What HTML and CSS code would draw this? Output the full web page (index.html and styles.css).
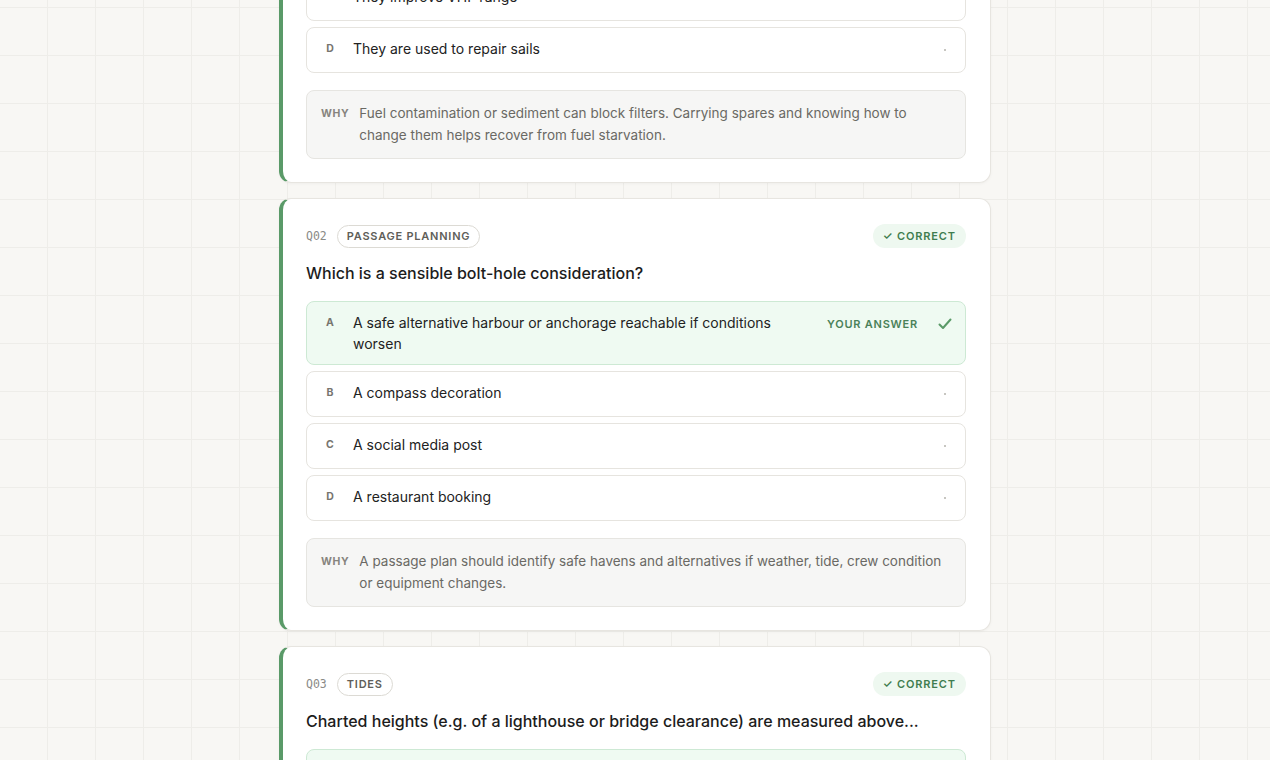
FILE: index.html
```html
<!DOCTYPE html>
<html lang="en">
<head>
    <meta charset="UTF-8">
    <meta name="viewport" content="width=device-width, initial-scale=1.0">
    <title>Quiz Review</title>
    <link rel="stylesheet" href="styles.css">
</head>
<body>
    <main class="quiz">
        <article class="q-card">
            <div class="q-head">
                <span class="q-num">Q01</span>
                <span class="q-tag">Engine</span>
                <span class="q-status">✓ Correct</span>
            </div>
            <h2 class="q-text">Why should you carry spare fuel filters on board?</h2>
            <ul class="options">
                <li class="option picked">
                    <span class="opt-key">A</span>
                    <span class="opt-text">A blocked filter can stop the engine, so spares let you change them at sea</span>
                    <span class="opt-note">Your answer</span>
                    <span class="opt-mark"><svg width="14" height="14" viewBox="0 0 14 14"><path d="M1.5 7.5 L5 11 L12.5 2.5" fill="none" stroke="#5a9a68" stroke-width="2" stroke-linecap="round" stroke-linejoin="round"/></svg></span>
                </li>
                <li class="option">
                    <span class="opt-key">B</span>
                    <span class="opt-text">They make the engine run faster</span>
                    <span class="opt-mark"><i class="dot"></i></span>
                </li>
                <li class="option">
                    <span class="opt-key">C</span>
                    <span class="opt-text">They improve VHF range</span>
                    <span class="opt-mark"><i class="dot"></i></span>
                </li>
                <li class="option">
                    <span class="opt-key">D</span>
                    <span class="opt-text">They are used to repair sails</span>
                    <span class="opt-mark"><i class="dot"></i></span>
                </li>
            </ul>
            <div class="why">
                <span class="why-label">Why</span>
                <p>Fuel contamination or sediment can block filters. Carrying spares and knowing how to change them helps recover from fuel starvation.</p>
            </div>
        </article>

        <article class="q-card">
            <div class="q-head">
                <span class="q-num">Q02</span>
                <span class="q-tag">Passage planning</span>
                <span class="q-status">✓ Correct</span>
            </div>
            <h2 class="q-text">Which is a sensible bolt-hole consideration?</h2>
            <ul class="options">
                <li class="option picked">
                    <span class="opt-key">A</span>
                    <span class="opt-text">A safe alternative harbour or anchorage reachable if conditions worsen</span>
                    <span class="opt-note">Your answer</span>
                    <span class="opt-mark"><svg width="14" height="14" viewBox="0 0 14 14"><path d="M1.5 7.5 L5 11 L12.5 2.5" fill="none" stroke="#5a9a68" stroke-width="2" stroke-linecap="round" stroke-linejoin="round"/></svg></span>
                </li>
                <li class="option">
                    <span class="opt-key">B</span>
                    <span class="opt-text">A compass decoration</span>
                    <span class="opt-mark"><i class="dot"></i></span>
                </li>
                <li class="option">
                    <span class="opt-key">C</span>
                    <span class="opt-text">A social media post</span>
                    <span class="opt-mark"><i class="dot"></i></span>
                </li>
                <li class="option">
                    <span class="opt-key">D</span>
                    <span class="opt-text">A restaurant booking</span>
                    <span class="opt-mark"><i class="dot"></i></span>
                </li>
            </ul>
            <div class="why">
                <span class="why-label">Why</span>
                <p>A passage plan should identify safe havens and alternatives if weather, tide, crew condition or equipment changes.</p>
            </div>
        </article>

        <article class="q-card">
            <div class="q-head">
                <span class="q-num">Q03</span>
                <span class="q-tag">Tides</span>
                <span class="q-status">✓ Correct</span>
            </div>
            <h2 class="q-text">Charted heights (e.g. of a lighthouse or bridge clearance) are measured above...</h2>
            <ul class="options">
                <li class="option picked">
                    <span class="opt-key">A</span>
                    <span class="opt-text">Mean High Water Springs (MHWS)</span>
                    <span class="opt-note">Your answer</span>
                    <span class="opt-mark"><svg width="14" height="14" viewBox="0 0 14 14"><path d="M1.5 7.5 L5 11 L12.5 2.5" fill="none" stroke="#5a9a68" stroke-width="2" stroke-linecap="round" stroke-linejoin="round"/></svg></span>
                </li>
                <li class="option">
                    <span class="opt-key">B</span>
                    <span class="opt-text">Chart datum</span>
                    <span class="opt-mark"><i class="dot"></i></span>
                </li>
                <li class="option">
                    <span class="opt-key">C</span>
                    <span class="opt-text">Mean sea level</span>
                    <span class="opt-mark"><i class="dot"></i></span>
                </li>
                <li class="option">
                    <span class="opt-key">D</span>
                    <span class="opt-text">The seabed</span>
                    <span class="opt-mark"><i class="dot"></i></span>
                </li>
            </ul>
            <div class="why">
                <span class="why-label">Why</span>
                <p>Heights and clearances are given above MHWS, so the real clearance is usually greater than charted.</p>
            </div>
        </article>
    </main>
</body>
</html>
```

FILE: styles.css
```css
body {
    margin: 0;
    font-family: 'Inter', 'Noto Sans', sans-serif;
    color: #1f1f1f;
    background-color: #f8f7f4;
    background-image:
        linear-gradient(to right, #eeede9 1px, transparent 1px),
        linear-gradient(to bottom, #eeede9 1px, transparent 1px);
    background-size: 48px 48px;
    background-position: -1px 7px;
}
.quiz {
    width: 712px;
    margin: -250px auto 40px;
    display: flex;
    flex-direction: column;
    gap: 15px;
}
.q-card {
    background: #fff;
    border: 1px solid #e7e5e0;
    border-left: 4px solid #5a9a68;
    border-radius: 12px;
    padding: 25px 24px 23px 23px;
    box-shadow: 0 1px 3px rgba(0, 0, 0, 0.04);
}
.q-head {
    display: flex;
    align-items: center;
    gap: 10px;
    height: 24px;
}
.q-num {
    font-family: 'DejaVu Sans Mono', monospace;
    font-size: 11.5px;
    color: #8a8a86;
}
.q-tag {
    font-size: 11px;
    font-weight: 600;
    letter-spacing: 0.07em;
    text-transform: uppercase;
    color: #605e59;
    border: 1px solid #dcdad4;
    border-radius: 999px;
    padding: 0 9px;
    line-height: 21px;
}
.q-status {
    margin-left: auto;
    font-size: 11px;
    font-weight: 600;
    letter-spacing: 0.08em;
    text-transform: uppercase;
    color: #3f7d4f;
    background: #eef8f0;
    border-radius: 999px;
    padding: 0 10px;
    line-height: 24px;
}
.q-text {
    margin: 14px 0 17px;
    font-size: 16px;
    font-weight: 500;
    line-height: 22px;
    color: #1c1c1c;
}
.options {
    list-style: none;
    margin: 0;
    padding: 0;
    display: flex;
    flex-direction: column;
    gap: 6px;
}
.option {
    display: flex;
    align-items: flex-start;
    border: 1px solid #e6e4df;
    border-radius: 8px;
    padding: 10px 13px 10px 14px;
    background: #fff;
}
.option.picked {
    background: #effaf2;
    border-color: #cde9d4;
}
.opt-key {
    width: 18px;
    flex-shrink: 0;
    text-align: center;
    font-size: 10.5px;
    font-weight: 700;
    color: #77756f;
    line-height: 22px;
}
.opt-text {
    flex: 1;
    margin-left: 14px;
    font-size: 14px;
    line-height: 21px;
    color: #222;
}
.opt-note {
    margin-left: 20px;
    font-size: 11px;
    font-weight: 600;
    letter-spacing: 0.07em;
    text-transform: uppercase;
    color: #4a8159;
    line-height: 24px;
}
.opt-mark {
    width: 14px;
    height: 24px;
    margin-left: 20px;
    flex-shrink: 0;
    display: flex;
    align-items: center;
    justify-content: center;
}
.dot {
    width: 2px;
    height: 2px;
    border-radius: 50%;
    background: #b5b3ad;
}
.why {
    margin-top: 17px;
    display: flex;
    align-items: flex-start;
    gap: 10px;
    background: #f6f6f5;
    border: 1px solid #e6e5e1;
    border-radius: 8px;
    padding: 12px 14px;
}
.why-label {
    flex-shrink: 0;
    font-size: 10.5px;
    font-weight: 700;
    letter-spacing: 0.06em;
    text-transform: uppercase;
    color: #86847e;
    line-height: 21px;
}
.why p {
    margin: 0;
    font-size: 13.5px;
    line-height: 21.5px;
    color: #6a6964;
}
```
